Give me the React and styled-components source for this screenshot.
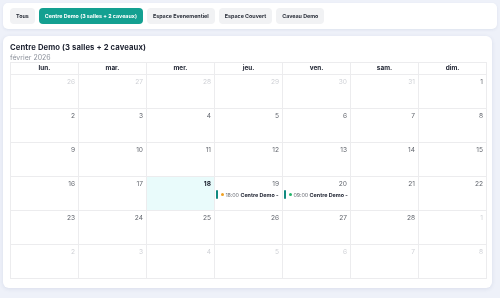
import styled, { createGlobalStyle } from 'styled-components';

const Global = createGlobalStyle`
  body {
    margin: 0;
    background: #eef1f9;
    font-family: Inter, "Noto Sans", sans-serif;
    color: #1d2230;
    -webkit-font-smoothing: antialiased;
  }
`;

const Page = styled.div`
  width: 500px;
  height: 298px;
  padding: 3px 8px 0 3px;
  box-sizing: border-box;
  display: flex;
  flex-direction: column;
  gap: 7px;
  will-change: transform;
`;

const FilterBar = styled.div`
  margin-right: -5px;
  background: #fff;
  border-radius: 5px;
  box-shadow: 0 1px 3px rgba(40, 60, 120, 0.08);
  padding: 5px 7px;
  display: flex;
  gap: 4px;
`;

const Chip = styled.button`
  height: 16px;
  padding: 0 6px;
  border: none;
  border-radius: 4px;
  font-family: Inter, sans-serif;
  font-size: 5.35px;
  font-weight: 700;
  background: ${(p) => (p.$active ? '#13a091' : '#f1f2f4')};
  color: ${(p) => (p.$active ? '#fff' : '#2a2f3a')};
  cursor: pointer;
`;

const Card = styled.div`
  background: #fff;
  border-radius: 6px;
  box-shadow: 0 1px 4px rgba(40, 60, 120, 0.1);
  padding: 6px 5px 9px 7px;
`;

const Title = styled.div`
  font-size: 7.7px;
  font-weight: 700;
  line-height: 12px;
  letter-spacing: 0.1px;
`;

const Subtitle = styled.div`
  font-size: 7px;
  color: #8c919b;
  line-height: 8px;
`;

const Grid = styled.div`
  display: grid;
  grid-template-columns: repeat(7, 1fr);
  grid-template-rows: 12px repeat(6, 34px);
  border-top: 1px solid #ececee;
  border-left: 1px solid #ececee;
`;

const Head = styled.div`
  border-right: 1px solid #ececee;
  border-bottom: 1px solid #ececee;
  font-size: 6.4px;
  font-weight: 700;
  text-align: center;
  line-height: 11px;
`;

const Cell = styled.div`
  border-right: 1px solid #ececee;
  border-bottom: 1px solid #ececee;
  background: ${(p) => (p.$today ? '#e9fbfb' : '#fff')};
  display: flex;
  flex-direction: column;
  min-width: 0;
`;

const DayNum = styled.div`
  text-align: right;
  padding: 3px 3px 0 0;
  font-size: 6.6px;
  line-height: 9px;
  color: ${(p) => (p.$muted ? '#cfd1d6' : p.$today ? '#1d2230' : '#62666e')};
  font-weight: ${(p) => (p.$today ? 700 : 400)};
`;

const Event = styled.div`
  margin: 1px 0 0 1px;
  display: flex;
  align-items: center;
  gap: 1.5px;
  font-size: 5.4px;
  white-space: nowrap;
  overflow: hidden;
  color: #6a6e76;
`;

const Bar = styled.span`
  flex: none;
  width: 2px;
  height: 9px;
  border-radius: 1px;
  background: #108a80;
`;

const Dot = styled.span`
  flex: none;
  width: 3.5px;
  height: 3.5px;
  border-radius: 50%;
  margin-left: 1px;
  background: ${(p) => p.$color};
`;

const Time = styled.span`
  letter-spacing: -0.1px;
`;

const EvTitle = styled.b`
  font-weight: 700;
  color: #1d2230;
`;

const days = ['lun.', 'mar.', 'mer.', 'jeu.', 'ven.', 'sam.', 'dim.'];

const cells = [];
[26, 27, 28, 29, 30, 31].forEach((d) => cells.push({ d, muted: true }));
for (let d = 1; d <= 28; d++) cells.push({ d });
for (let d = 1; d <= 8; d++) cells.push({ d, muted: true });

const events = {
  19: { time: '18:00', color: '#f0a020' },
  20: { time: '09:00', color: '#22b46a' },
};

export default function App() {
  return (
    <>
      <Global />
      <Page>
        <FilterBar>
          <Chip>Tous</Chip>
          <Chip $active>Centre Demo (3 salles + 2 caveaux)</Chip>
          <Chip>Espace Evenementiel</Chip>
          <Chip>Espace Couvert</Chip>
          <Chip>Caveau Demo</Chip>
        </FilterBar>
        <Card>
          <Title>Centre Demo (3 salles + 2 caveaux)</Title>
          <Subtitle>février 2026</Subtitle>
          <Grid>
            {days.map((d) => (
              <Head key={d}>{d}</Head>
            ))}
            {cells.map((c, i) => {
              const today = !c.muted && c.d === 18;
              const ev = !c.muted && events[c.d];
              return (
                <Cell key={i} $today={today}>
                  <DayNum $muted={c.muted} $today={today}>
                    {c.d}
                  </DayNum>
                  {ev && (
                    <Event>
                      <Bar />
                      <Dot $color={ev.color} />
                      <Time>{ev.time}</Time>
                      <EvTitle>Centre Demo -</EvTitle>
                    </Event>
                  )}
                </Cell>
              );
            })}
          </Grid>
        </Card>
      </Page>
    </>
  );
}
